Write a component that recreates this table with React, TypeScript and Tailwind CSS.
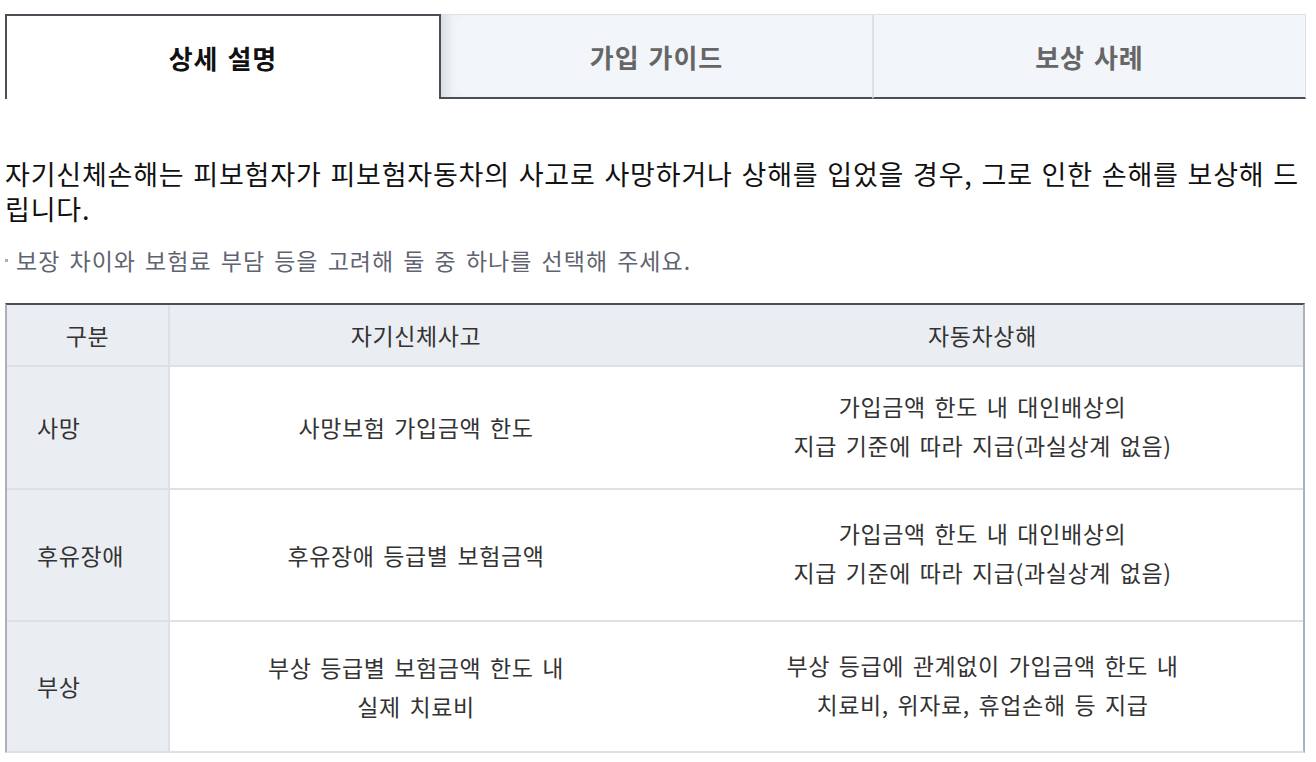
const font = { fontFamily: '"Noto Sans CJK KR", "Noto Sans", sans-serif' };

const tabs = ["상세 설명", "가입 가이드", "보상 사례"];

const rows = [
  {
    label: "사망",
    self: ["사망보험 가입금액 한도"],
    car: ["가입금액 한도 내 대인배상의", "지급 기준에 따라 지급(과실상계 없음)"],
    h: "h-[123px]",
  },
  {
    label: "후유장애",
    self: ["후유장애 등급별 보험금액"],
    car: ["가입금액 한도 내 대인배상의", "지급 기준에 따라 지급(과실상계 없음)"],
    h: "h-[132px]",
  },
  {
    label: "부상",
    self: ["부상 등급별 보험금액 한도 내", "실제 치료비"],
    car: ["부상 등급에 관계없이 가입금액 한도 내", "치료비, 위자료, 휴업손해 등 지급"],
    h: "h-[129px]",
  },
];

export default function App() {
  return (
    <div className="min-h-[762px] w-[1316px] bg-white pl-[5px] pr-[10px]" style={font}>
      <div className="flex pt-[14px]">
        {tabs.map((t, i) =>
          i === 0 ? (
            <div
              key={t}
              className="flex h-[85px] w-[436px] items-center justify-center border-2 border-b-0 border-[#4a4f57] bg-white text-[26px] font-bold tracking-[1px] text-[#111] [word-spacing:2px]"
            >
              {t}
            </div>
          ) : (
            <div
              key={t}
              className={`flex h-[85px] flex-1 items-center justify-center border border-b-2 border-[#dde1e6] border-b-[#4a4f57] bg-[#f2f5f9] text-[26px] font-bold tracking-[1px] text-[#666] [word-spacing:2px] ${
                i === 1 ? "border-l-0 shadow-[inset_14px_0_14px_-10px_rgba(60,70,90,0.18)]" : ""
              }`}
            >
              {t}
            </div>
          ),
        )}
      </div>

      <p className="mt-[57px] text-[27px] leading-[35px] tracking-[0.8px] text-[#111] [word-spacing:2px]">
        자기신체손해는 피보험자가 피보험자동차의 사고로 사망하거나 상해를 입었을 경우, 그로 인한 손해를 보상해
        드립니다.
      </p>

      <p className="mt-[21px] flex items-center text-[23px] leading-[26px] tracking-[1px] text-[#5f6470] [word-spacing:3px]">
        <span className="mr-[8px] h-[3px] w-[3px] bg-[#a9b1bb]" />
        보장 차이와 보험료 부담 등을 고려해 둘 중 하나를 선택해 주세요.
      </p>

      {/* 비교 표 */}
      <div className="mt-[30px] w-[1300px] border-2 border-t-[#4a4f57] border-r-[#a9b4be] border-b-[#dde1e5] border-l-[#a9b1bb] text-[23px] tracking-[0.6px] text-[#333] [word-spacing:3px]">
        <div className="flex h-[62px] border-b-2 border-[#dde1e5] bg-[#eaedf2]">
          <div className="flex w-[163px] items-center justify-center border-r-2 border-[#dde1e5]">구분</div>
          <div className="flex w-[492px] items-center justify-center">자기신체사고</div>
          <div className="flex flex-1 items-center justify-center">자동차상해</div>
        </div>
        {rows.map((r, i) => (
          <div
            key={r.label}
            className={`flex ${r.h} ${i < rows.length - 1 ? "border-b-2 border-[#dde1e5]" : ""}`}
          >
            <div className="flex w-[163px] items-center border-r-2 border-[#dde1e5] bg-[#eaedf2] pl-[30px]">
              {r.label}
            </div>
            <div className="flex w-[492px] flex-col items-center justify-center leading-[39px]">
              {r.self.map((l) => (
                <span key={l}>{l}</span>
              ))}
            </div>
            <div className="flex flex-1 flex-col items-center justify-center pb-[4px] leading-[39px]">
              {r.car.map((l) => (
                <span key={l}>{l}</span>
              ))}
            </div>
          </div>
        ))}
      </div>
    </div>
  );
}
